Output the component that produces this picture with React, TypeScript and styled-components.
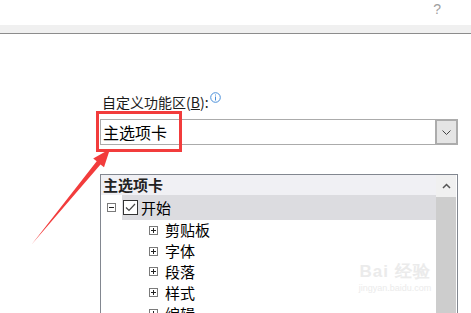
import React from "react";
import styled, { createGlobalStyle } from "styled-components";

const GlobalStyle = createGlobalStyle`
  html, body {
    margin: 0;
    padding: 0;
    background: #ffffff;
  }
  body {
    font-family: "Noto Sans CJK SC", "Liberation Sans", sans-serif;
  }
`;

const Page = styled.div`
  position: relative;
  width: 471px;
  height: 313px;
  overflow: hidden;
  background: #fff;
`;

const TitleBar = styled.div`
  height: 25px;
  display: flex;
  justify-content: flex-end;
  align-items: flex-start;
  padding-right: 30px;
  box-sizing: border-box;
`;

const Help = styled.span`
  font-family: "Liberation Sans", sans-serif;
  font-size: 14px;
  line-height: 16px;
  color: #a0a0a0;
  margin-top: 1px;
`;

const Band = styled.div`
  height: 8px;
  background: #f0f0f0;
  border-bottom: 1px solid #8c8c8c;
`;

const Content = styled.div`
  padding: 60px 0 0 100px;
  display: flex;
  flex-direction: column;
`;

const Label = styled.div`
  display: flex;
  align-items: flex-start;
  height: 16px;
  font-size: 14px;
  line-height: 16px;
  color: #1a1a1a;
  padding-left: 2px;
  margin-bottom: 9px;
  u {
    text-decoration: underline;
  }
`;

const Combo = styled.div`
  width: 358px;
  height: 26px;
  box-sizing: border-box;
  border: 1px solid #ababab;
  display: flex;
  align-items: stretch;
`;

const ComboText = styled.div`
  flex: 1;
  font-size: 16px;
  line-height: 24px;
  padding-left: 2px;
  color: #000;
`;

const DropButton = styled.div`
  width: 23px;
  box-sizing: border-box;
  margin: -1px -1px -1px 0;
  border: 2px solid #acacac;
  background: #e5e5e5;
  display: flex;
  align-items: center;
  justify-content: center;
`;

const ListBox = styled.div`
  margin-top: 29px;
  width: 358px;
  height: 150px;
  box-sizing: border-box;
  border: 1px solid #828790;
  border-bottom: none;
  display: flex;
  padding: 0 1px 0 0;
`;

const Tree = styled.div`
  flex: 1;
  display: flex;
  flex-direction: column;
`;

const HeaderRow = styled.div`
  height: 20px;
  background: #f0f0f4;
  font-size: 15px;
  line-height: 20px;
  font-weight: bold;
  padding-left: 2px;
  color: #222;
`;

const TopRow = styled.div`
  height: 25px;
  display: flex;
  align-items: center;
`;

const ToggleBox = styled.span<{ $indent: number }>`
  width: 9px;
  height: 9px;
  box-sizing: border-box;
  border: 1px solid #7a7a7a;
  margin-left: ${(p) => p.$indent}px;
  position: relative;
  flex-shrink: 0;
  background: #fff;
`;

const Bar = styled.span<{ $vertical?: boolean }>`
  position: absolute;
  background: #222;
  left: ${(p) => (p.$vertical ? "3px" : "1px")};
  top: ${(p) => (p.$vertical ? "1px" : "3px")};
  width: ${(p) => (p.$vertical ? "1px" : "5px")};
  height: ${(p) => (p.$vertical ? "5px" : "1px")};
`;

const Selected = styled.div`
  margin-left: 6px;
  flex: 1;
  height: 25px;
  background: #dcdce0;
  display: flex;
  align-items: center;
  padding-left: 1px;
`;

const Check = styled.span`
  width: 15px;
  height: 15px;
  box-sizing: border-box;
  border: 1px solid #333;
  background: #fff;
  display: flex;
  align-items: center;
  justify-content: center;
`;

const ItemText = styled.span<{ $gap: number }>`
  font-size: 15px;
  line-height: 20px;
  margin-left: ${(p) => p.$gap}px;
  color: #000;
`;

const ChildRow = styled.div`
  height: 21px;
  display: flex;
  align-items: center;
`;

const ScrollBar = styled.div`
  width: 20px;
  display: flex;
  flex-direction: column;
`;

const ScrollUp = styled.div`
  height: 22px;
  background: #f0f0f0;
  display: flex;
  align-items: center;
  justify-content: center;
`;

const Thumb = styled.div`
  flex: 1;
  background: #cdcdcd;
`;

const Highlight = styled.div`
  position: absolute;
  left: 96px;
  top: 111px;
  width: 86px;
  height: 41px;
  box-sizing: border-box;
  border: 3px solid #f23c3c;
`;

const Overlay = styled.svg`
  position: absolute;
  left: 0;
  top: 0;
  pointer-events: none;
`;

const Watermark = styled.div`
  position: absolute;
  left: 350px;
  top: 262px;
  width: 90px;
  display: flex;
  flex-direction: column;
  align-items: center;
  color: #ebebeb;
  font-family: "Liberation Sans", sans-serif;
`;

const WmLogo = styled.div`
  font-size: 17px;
  line-height: 20px;
  font-weight: bold;
  letter-spacing: 1px;
`;

const WmUrl = styled.div`
  font-size: 9px;
  line-height: 12px;
`;

const children = ["剪贴板", "字体", "段落", "样式", "编辑"];

const App = () => {
  return (
    <Page>
      <GlobalStyle />
      <TitleBar>
        <Help>?</Help>
      </TitleBar>
      <Band />
      <Content>
        <Label>
          自定义功能区(<u>B</u>):
          <svg width="11" height="11" viewBox="0 0 11 11" style={{ marginTop: -2, marginLeft: 1 }}>
            <circle cx="5.5" cy="5.5" r="4.8" fill="none" stroke="#4a8fd9" strokeWidth="1" />
            <rect x="5" y="4.5" width="1" height="4" fill="#4a8fd9" />
            <rect x="5" y="2.5" width="1" height="1" fill="#4a8fd9" />
          </svg>
        </Label>
        <Combo>
          <ComboText>主选项卡</ComboText>
          <DropButton>
            <svg width="9" height="5" viewBox="0 0 9 5">
              <path d="M0.5 0.5 L4.5 4.5 L8.5 0.5" fill="none" stroke="#444" strokeWidth="1" />
            </svg>
          </DropButton>
        </Combo>
        <ListBox>
          <Tree>
            <HeaderRow>主选项卡</HeaderRow>
            <TopRow>
              <ToggleBox $indent={6}>
                <Bar />
              </ToggleBox>
              <Selected>
                <Check>
                  <svg width="11" height="9" viewBox="0 0 11 9">
                    <path d="M1 4.5 L4 7.5 L10 1" fill="none" stroke="#444" strokeWidth="1.2" />
                  </svg>
                </Check>
                <ItemText $gap={3}>开始</ItemText>
              </Selected>
            </TopRow>
            {children.map((name) => (
              <ChildRow key={name}>
                <ToggleBox $indent={48}>
                  <Bar />
                  <Bar $vertical />
                </ToggleBox>
                <ItemText $gap={7}>{name}</ItemText>
              </ChildRow>
            ))}
          </Tree>
          <ScrollBar>
            <ScrollUp>
              <svg width="9" height="6" viewBox="0 0 9 6">
                <path d="M1 5 L4.5 1.5 L8 5" fill="none" stroke="#555" strokeWidth="1.5" />
              </svg>
            </ScrollUp>
            <Thumb />
          </ScrollBar>
        </ListBox>
      </Content>
      <Watermark>
        <WmLogo>Bai 经验</WmLogo>
        <WmUrl>jingyan.baidu.com</WmUrl>
      </Watermark>
      <Highlight />
      <Overlay width="471" height="313" viewBox="0 0 471 313">
        <polygon
          points="32,244 96.7,161.3 93.2,158.5 110,149 104,167.3 100.5,164.5"
          fill="#f23c3c"
        />
      </Overlay>
    </Page>
  );
};

export default App;
